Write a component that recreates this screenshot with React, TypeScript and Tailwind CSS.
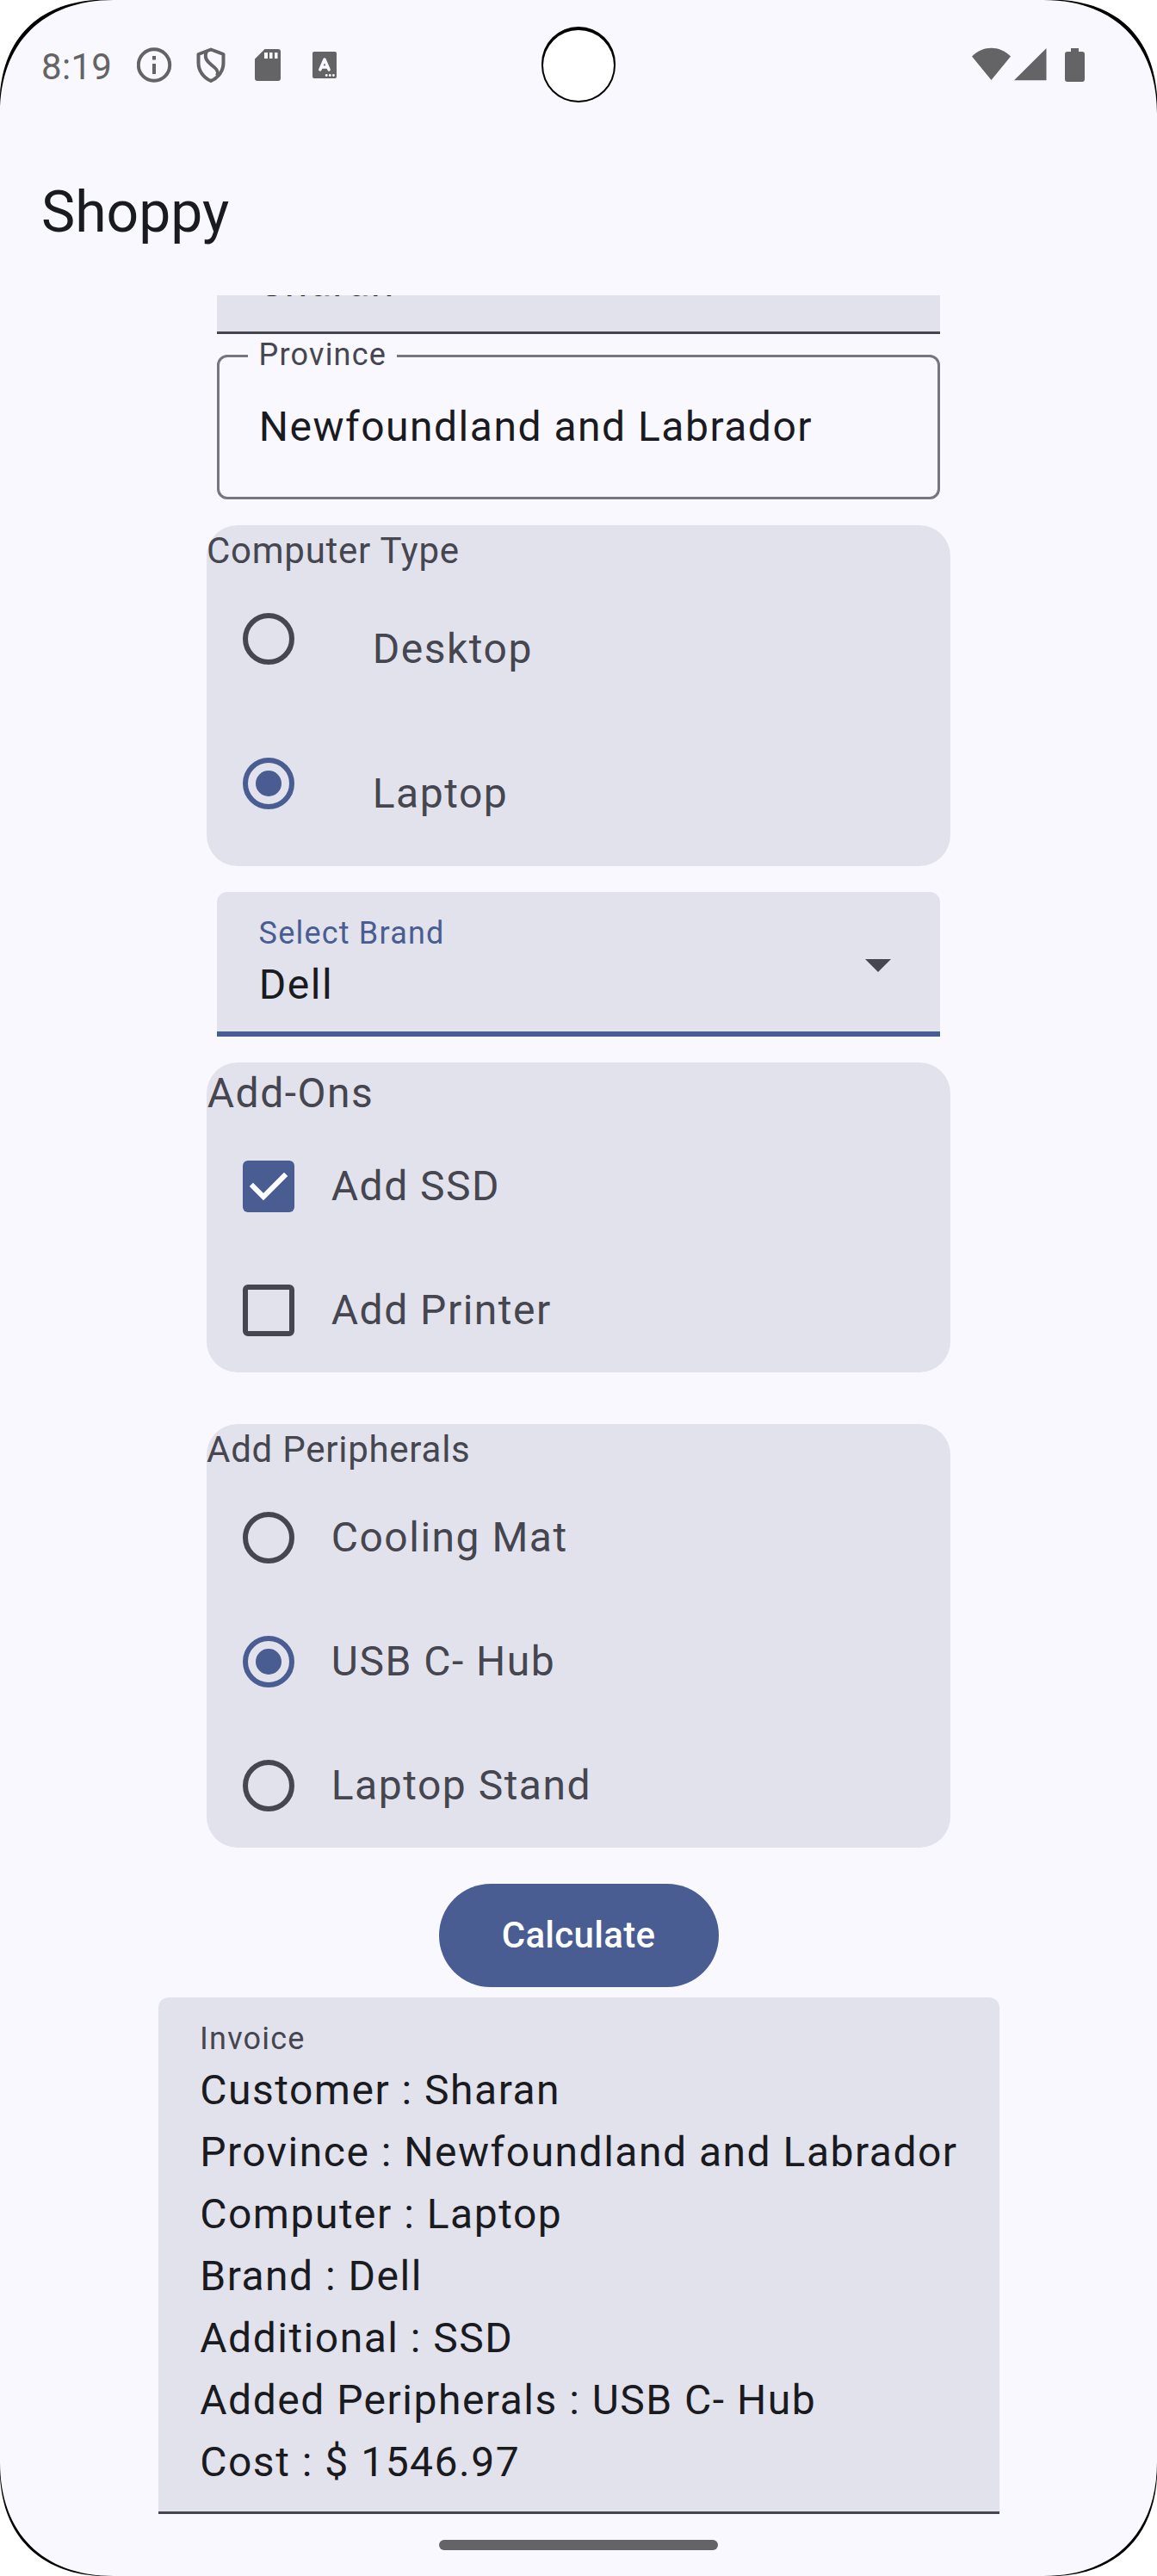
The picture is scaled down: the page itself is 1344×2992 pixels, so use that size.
import type { ReactNode } from "react";

const GREY = "#646466";

function StatusBar() {
  return (
    <div className="flex h-[156px] shrink-0 items-start pl-12 pt-[51px]">
      <span className="w-[111px] pt-[2px] text-[42px] leading-[49px] tracking-[0.3px] text-[#646466]">8:19</span>
      <svg width="240" height="54" viewBox="159 51 240 54" fill={GREY}>
        <circle cx="179" cy="75.5" r="18.2" fill="none" stroke={GREY} strokeWidth="4" />
        <rect x="177" y="65" width="4" height="4.5" />
        <rect x="177" y="74" width="4" height="12" />
        <path d="M245 57.5 L259.5 63 V73 C259.5 82 254 90 245 94 C236 90 230.5 82 230.5 73 V63 Z" fill="none" stroke={GREY} strokeWidth="4" strokeLinejoin="round" />
        <path d="M240 59.5 C236 69 243 73 247 76.5 C253 81 254 84 252 88" fill="none" stroke={GREY} strokeWidth="4" />
        <path fillRule="evenodd" d="M307.5 57 H323 a3 3 0 0 1 3 3 V91 a3 3 0 0 1 -3 3 H299 a3 3 0 0 1 -3 -3 V68.5 Z M307 61 v7 h4 v-7 Z M313 61 v7 h3.5 v-7 Z M319 61 v7 h3.5 v-7 Z" />
        <rect x="363" y="60" width="28" height="31" rx="2" />
        <path d="M371.8 81 L377 69 L382.2 81 M373.5 78 H380.5" fill="none" stroke="#f9f8ff" strokeWidth="3.4" strokeLinecap="round" strokeLinejoin="round" />
        <g fill="#f9f8ff">
          <circle cx="379.2" cy="87.5" r="1.4" />
          <circle cx="383.3" cy="87.5" r="1.4" />
          <circle cx="387.4" cy="87.5" r="1.4" />
        </g>
      </svg>
      <svg className="ml-auto mr-[72px]" width="150" height="54" viewBox="1122 51 150 54" fill={GREY}>
        <path d="M1151.5 93 L1129 65.5 C1142 52.5 1161 52.5 1174 65.500 Z" />
        <path d="M1178 93.3 L1215.5 56 V93.3 Z" />
        <path d="M1244 56 h9 v4 h4 a3 3 0 0 1 3 3 V92 a3 3 0 0 1 -3 3 H1240 a3 3 0 0 1 -3 -3 V63 a3 3 0 0 1 3 -3 h4 Z" />
      </svg>
    </div>
  );
}

function Radio({ checked = false }: { checked?: boolean }) {
  return (
    <div className="flex size-36 shrink-0 items-center justify-center">
      {checked ? (
        <div className="flex size-[60px] items-center justify-center rounded-full border-[6px] border-[#495d92]">
          <div className="size-[30px] rounded-full bg-[#495d92]" />
        </div>
      ) : (
        <div className="size-[60px] rounded-full border-[6px] border-[#45464f]" />
      )}
    </div>
  );
}

function Checkbox({ checked = false }: { checked?: boolean }) {
  return (
    <div className="flex size-36 shrink-0 items-center justify-center">
      {checked ? (
        <div className="size-[60px] rounded-[6px] bg-[#495d92]">
          <svg width="60" height="60" fill="none" stroke="#ffffff" strokeWidth="6" strokeLinecap="square">
            <path d="M12 30 L24 42 L48 18" />
          </svg>
        </div>
      ) : (
        <div className="size-[60px] rounded-[6px] border-[6px] border-[#45464f]" />
      )}
    </div>
  );
}

const body = "indent-[0.75px] text-[48px] leading-[72px] tracking-[1.5px]";
const small = "indent-[0.6px] text-[36px] leading-[48px] tracking-[1.2px]";
const medium = "text-[42px] leading-[60px] tracking-[0.75px]";

function Card({ className, children }: { className: string; children: ReactNode }) {
  return <section className={`w-[864px] rounded-[36px] bg-[#e2e2ec] text-[#45464f] ${className}`}>{children}</section>;
}

function Option({ control, label }: { control: ReactNode; label: string }) {
  return (
    <div className="flex h-36 items-center">
      {control}
      <span className={body}>{label}</span>
    </div>
  );
}

const invoice = [
  "Customer : Sharan",
  "Province : Newfoundland and Labrador",
  "Computer : Laptop",
  "Brand : Dell",
  "Additional : SSD",
  "Added Peripherals : USB C- Hub",
  "Cost : $ 1546.97",
];

/* One quarter of the display's bezel: white outside, black rim along the curve. */
function Corner({ className, thin = false }: { className: string; thin?: boolean }) {
  return (
    <svg className={`absolute size-[132px] ${className}`} viewBox="0 0 132 132">
      <path d="M0 0 H132 C50 0 0 50 0 132 Z" fill="#000000" />
      <path d={thin ? "M0 0 H115 C46 4 4 46 0 115 Z" : "M0 0 H110 C44 5 5 44 0 110 Z"} fill="#ffffff" />
    </svg>
  );
}

export default function App() {
  return (
    <div className="relative flex h-[2992px] w-[1344px] flex-col overflow-hidden bg-[#f9f8ff] font-[Roboto,sans-serif] text-[#1a1b21]">
      <StatusBar />
      <header className="flex h-[187px] shrink-0 items-start px-12 pt-[49px]">
        <h1 className="text-[66px] leading-[84px]">Shoppy</h1>
      </header>

      <main className="flex h-[2577px] shrink-0 flex-col items-center overflow-hidden">
        <div className="-mt-[123px] h-[168px] w-[840px] shrink-0 rounded-t-[12px] border-b-[3px] border-[#45464f] bg-[#e2e2ec] px-12 pt-[72px]">
          <div className={body}>Sharan</div>
        </div>

        <fieldset className="h-[192px] w-[840px] shrink-0 rounded-[12px] border-[3px] border-[#757680] px-[33px]">
          <legend className={`h-[51px] px-3 text-[#45464f] ${small}`}>Province</legend>
          <div className={`mt-[21px] px-3 ${body}`}>Newfoundland and Labrador</div>
        </fieldset>

        <Card className="mt-[30px] h-[396px] shrink-0">
          <div className={medium}>Computer Type</div>
          <div className="flex h-[168px] items-start">
            <Radio />
            <span className={`p-12 ${body}`}>Desktop</span>
          </div>
          <div className="flex h-[168px] items-start">
            <Radio checked />
            <span className={`p-12 ${body}`}>Laptop</span>
          </div>
        </Card>

        <div className="mt-[30px] flex h-[168px] w-[840px] shrink-0 items-center justify-between rounded-t-[12px] border-b-[6px] border-[#495d92] bg-[#e2e2ec] pl-12 pr-[57px]">
          <div className="-mb-[6px]">
            <div className={`text-[#495d92] ${small}`}>Select Brand</div>
            <div className={body}>Dell</div>
          </div>
          <svg className="mt-[9px]" width="30" height="15" fill="#45464f">
            <path d="M0 0 H30 L15 15 Z" />
          </svg>
        </div>

        <Card className="mt-[30px] shrink-0">
          <div className={body}>Add-Ons</div>
          <Option control={<Checkbox checked />} label="Add SSD" />
          <Option control={<Checkbox />} label="Add Printer" />
        </Card>

        <Card className="mt-[60px] shrink-0">
          <div className={medium}>Add Peripherals</div>
          <Option control={<Radio />} label="Cooling Mat" />
          <Option control={<Radio checked />} label="USB C- Hub" />
          <Option control={<Radio />} label="Laptop Stand" />
        </Card>

        <button className="mt-[42px] flex h-[120px] w-[325px] shrink-0 items-center justify-center rounded-full bg-[#495d92] text-[42px] font-medium leading-[60px] tracking-[0.3px] text-white">
          Calculate
        </button>

        <div className="mt-3 h-[600px] w-[977px] shrink-0 rounded-t-[12px] border-b-[3px] border-[#45464f] bg-[#e2e2ec] pl-12 pt-6">
          <div className={`text-[#45464f] ${small}`}>Invoice</div>
          {invoice.map((line) => (
            <div key={line} className={`whitespace-nowrap ${body}`}>
              {line}
            </div>
          ))}
        </div>
      </main>

      <div className="mx-auto mt-[30px] h-3 w-[324px] shrink-0 rounded-full bg-[#646466]" />

      <div className="absolute left-[629px] top-[31px] h-[88px] w-[86px] rounded-full bg-black p-[2px] pt-1">
        <div className="size-[82px] rounded-full bg-white" />
      </div>
      <Corner className="left-0 top-0" />
      <Corner className="right-0 top-0 -scale-x-100" />
      <Corner className="bottom-0 left-0 -scale-y-100" thin />
      <Corner className="bottom-0 right-0 -scale-100" thin />
    </div>
  );
}
